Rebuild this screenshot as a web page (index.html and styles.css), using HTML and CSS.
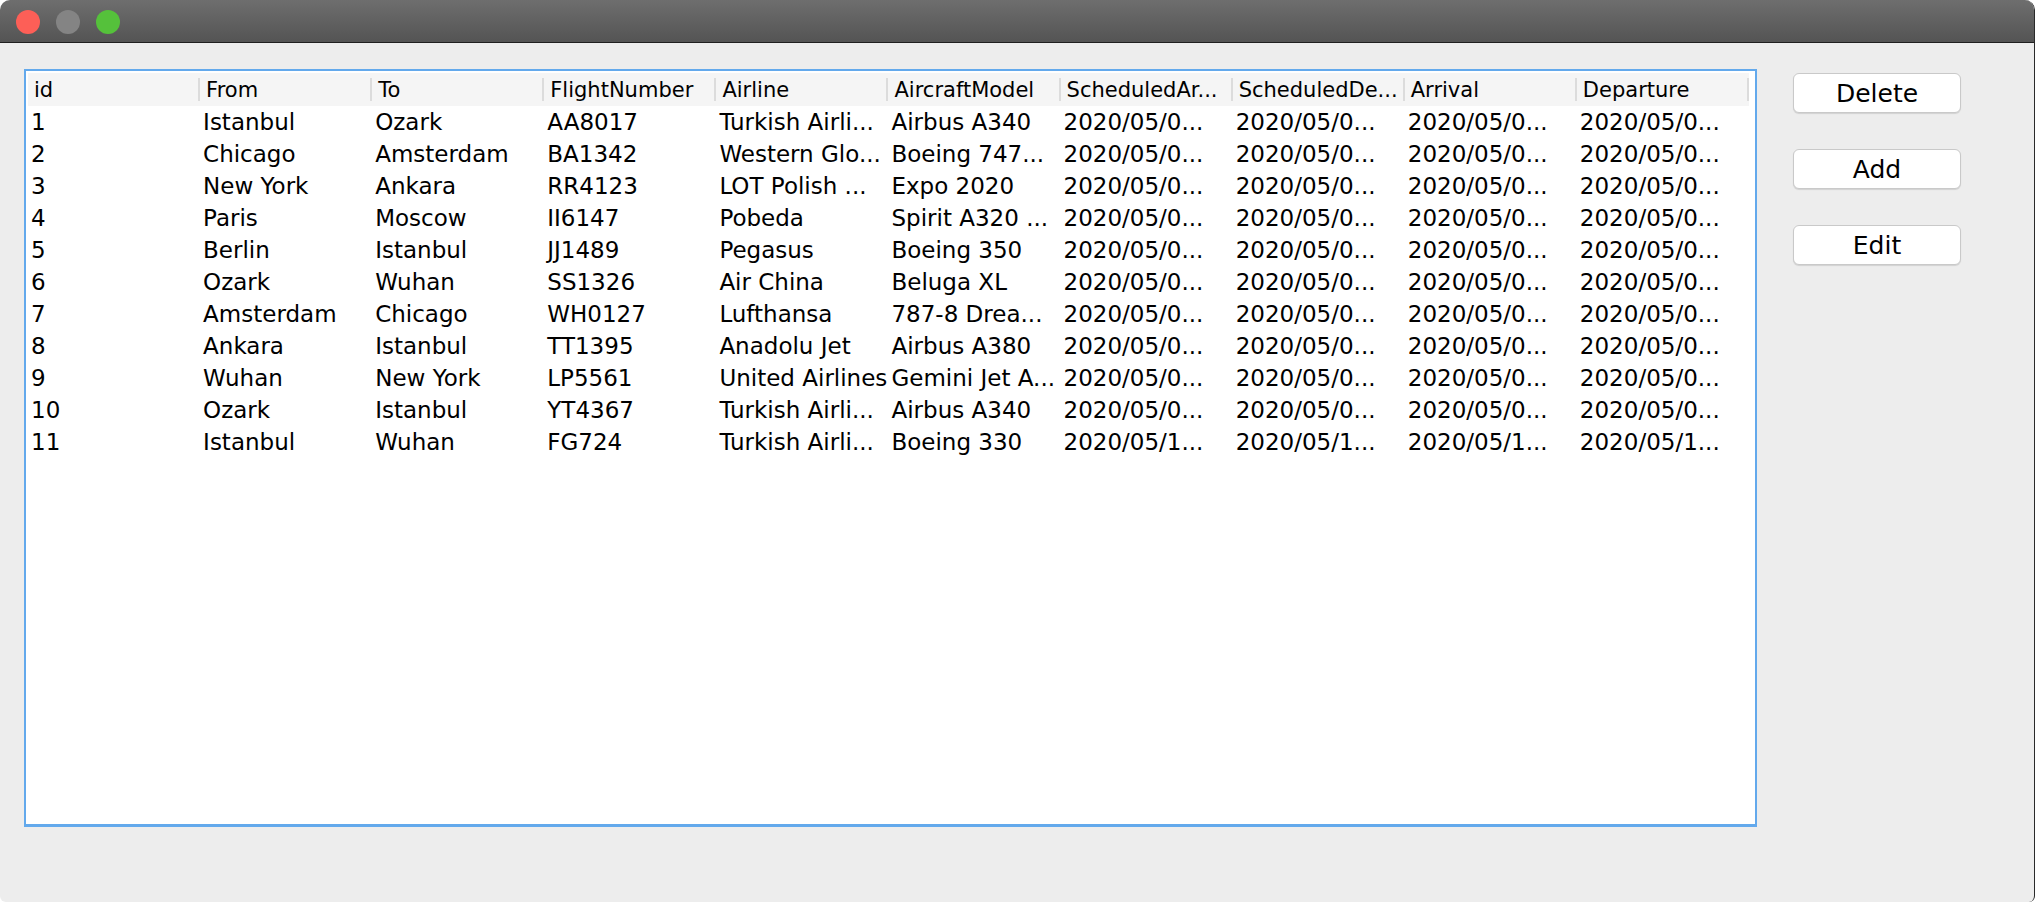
FILE: index.html
```html
<!DOCTYPE html>
<html>
<head>
<meta charset="utf-8">
<title>Flights</title>
<link rel="stylesheet" href="styles.css">
</head>
<body>
<div class="window">
  <div class="titlebar">
    <span class="light red"></span>
    <span class="light gray"></span>
    <span class="light green"></span>
  </div>
  <div class="content">
    <div class="scrollpane">
      <table class="grid">
        <thead>
          <tr>
            <th>id</th><th>From</th><th>To</th><th>FlightNumber</th><th>Airline</th><th>AircraftModel</th><th>ScheduledAr...</th><th>ScheduledDe...</th><th>Arrival</th><th>Departure</th>
          </tr>
        </thead>
        <tbody>
          <tr><td>1</td><td>Istanbul</td><td>Ozark</td><td>AA8017</td><td>Turkish Airli...</td><td>Airbus A340</td><td>2020/05/0...</td><td>2020/05/0...</td><td>2020/05/0...</td><td>2020/05/0...</td></tr>
          <tr><td>2</td><td>Chicago</td><td>Amsterdam</td><td>BA1342</td><td>Western Glo...</td><td>Boeing 747...</td><td>2020/05/0...</td><td>2020/05/0...</td><td>2020/05/0...</td><td>2020/05/0...</td></tr>
          <tr><td>3</td><td>New York</td><td>Ankara</td><td>RR4123</td><td>LOT Polish ...</td><td>Expo 2020</td><td>2020/05/0...</td><td>2020/05/0...</td><td>2020/05/0...</td><td>2020/05/0...</td></tr>
          <tr><td>4</td><td>Paris</td><td>Moscow</td><td>II6147</td><td>Pobeda</td><td>Spirit A320 ...</td><td>2020/05/0...</td><td>2020/05/0...</td><td>2020/05/0...</td><td>2020/05/0...</td></tr>
          <tr><td>5</td><td>Berlin</td><td>Istanbul</td><td>JJ1489</td><td>Pegasus</td><td>Boeing 350</td><td>2020/05/0...</td><td>2020/05/0...</td><td>2020/05/0...</td><td>2020/05/0...</td></tr>
          <tr><td>6</td><td>Ozark</td><td>Wuhan</td><td>SS1326</td><td>Air China</td><td>Beluga XL</td><td>2020/05/0...</td><td>2020/05/0...</td><td>2020/05/0...</td><td>2020/05/0...</td></tr>
          <tr><td>7</td><td>Amsterdam</td><td>Chicago</td><td>WH0127</td><td>Lufthansa</td><td>787-8 Drea...</td><td>2020/05/0...</td><td>2020/05/0...</td><td>2020/05/0...</td><td>2020/05/0...</td></tr>
          <tr><td>8</td><td>Ankara</td><td>Istanbul</td><td>TT1395</td><td>Anadolu Jet</td><td>Airbus A380</td><td>2020/05/0...</td><td>2020/05/0...</td><td>2020/05/0...</td><td>2020/05/0...</td></tr>
          <tr><td>9</td><td>Wuhan</td><td>New York</td><td>LP5561</td><td>United Airlines</td><td>Gemini Jet A...</td><td>2020/05/0...</td><td>2020/05/0...</td><td>2020/05/0...</td><td>2020/05/0...</td></tr>
          <tr><td>10</td><td>Ozark</td><td>Istanbul</td><td>YT4367</td><td>Turkish Airli...</td><td>Airbus A340</td><td>2020/05/0...</td><td>2020/05/0...</td><td>2020/05/0...</td><td>2020/05/0...</td></tr>
          <tr><td>11</td><td>Istanbul</td><td>Wuhan</td><td>FG724</td><td>Turkish Airli...</td><td>Boeing 330</td><td>2020/05/1...</td><td>2020/05/1...</td><td>2020/05/1...</td><td>2020/05/1...</td></tr>
        </tbody>
      </table>
    </div>
    <div class="actions">
      <button class="btn">Delete</button>
      <button class="btn">Add</button>
      <button class="btn">Edit</button>
    </div>
  </div>
</div>
</body>
</html>
```

FILE: styles.css
```css
html, body {
  margin: 0;
  padding: 0;
  background: #ffffff;
}

body {
  width: 2036px;
  height: 902px;
  overflow: hidden;
  font-family: "DejaVu Sans", "Liberation Sans", sans-serif;
  color: #000;
}

.window {
  width: 2034px;
  height: 902px;
  background: #ededed;
  border-right: 1px solid #2a2a2a;
  border-radius: 10px 10px 6px 6px;
  overflow: hidden;
  display: flex;
  flex-direction: column;
}

.titlebar {
  height: 43px;
  flex: none;
  background: linear-gradient(#6e6e6e, #545454);
  border-bottom: 1px solid #1f1f1f;
  display: flex;
  align-items: center;
  gap: 16px;
  padding-left: 16px;
  box-sizing: border-box;
  padding-top: 1px;
}

.light {
  width: 24px;
  height: 24px;
  border-radius: 50%;
  display: block;
}

.light.red { background: #fd5f57; }
.light.gray { background: #848484; }
.light.green { background: #55c13b; }

.content {
  flex: 1;
  display: flex;
  align-items: flex-start;
  padding: 26px 0 0 24px;
}

.scrollpane {
  width: 1725px;
  height: 749px;
  border: 2px solid #63a9ec;
  border-bottom-width: 3px;
  padding: 2px;
  background: #fff;
  flex: none;
}

.grid {
  width: 1721px;
  table-layout: fixed;
  border-collapse: collapse;
  font-size: 23px;
}

.grid th {
  height: 33px;
  padding: 1px 0 0 6px;
  box-sizing: border-box;
  background: #f5f5f5;
  font-weight: normal;
  text-align: left;
  position: relative;
  white-space: nowrap;
  overflow: hidden;
  font-size: 21px;
}

.grid th::after {
  content: "";
  position: absolute;
  right: 0;
  top: 5px;
  bottom: 5px;
  width: 2px;
  background: #dcdcdc;
}

.grid td {
  height: 32px;
  padding: 0 0 0 3px;
  box-sizing: border-box;
  white-space: nowrap;
  overflow: hidden;
}

.actions {
  display: flex;
  flex-direction: column;
  gap: 36px;
  margin-left: 36px;
  margin-top: 4px;
}

.btn {
  width: 168px;
  height: 40px;
  background: #ffffff;
  border: 1px solid #c9c9c9;
  border-radius: 6px;
  box-shadow: 0 1px 1px rgba(0,0,0,0.12);
  font-family: "DejaVu Sans", "Liberation Sans", sans-serif;
  font-size: 25px;
  color: #000;
  padding: 0;
}
```
